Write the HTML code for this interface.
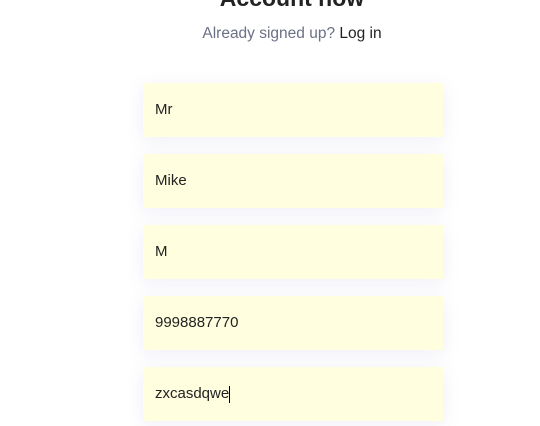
<!DOCTYPE html>
<html><head><style>
body{margin:0;width:540px;height:426px;overflow:hidden;background:#fff;font-family:"Liberation Sans",sans-serif;position:relative}
h1{position:absolute;top:-15px;left:0;width:584px;text-align:center;margin:0;font-size:23px;font-weight:bold;color:#222}
.sub{position:absolute;top:25px;left:0;width:584px;text-align:center;font-size:15.5px;color:#6b7084}
.sub span{color:#222}
.in{position:absolute;left:143px;width:300px;height:54px;background:#ffffe0;box-shadow:0 4px 18px rgba(120,120,200,0.12);font-size:15px;color:#222;line-height:54px;padding-left:12px;box-sizing:border-box}
.cur{display:inline-block;width:1px;height:17px;background:#000;vertical-align:middle}
</style></head><body>
<h1>Account now</h1>
<div class="sub">Already signed up? <span>Log in</span></div>
<div class="in" style="top:83px">Mr</div>
<div class="in" style="top:154px">Mike</div>
<div class="in" style="top:225px">M</div>
<div class="in" style="top:296px">9998887770</div>
<div class="in" style="top:367px">zxcasdqwe<span class="cur"></span></div>
</body></html>
